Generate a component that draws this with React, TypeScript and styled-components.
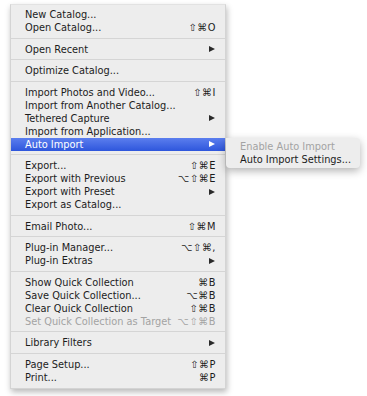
import React from 'react';
import styled, { createGlobalStyle, css } from 'styled-components';

const GlobalStyle = createGlobalStyle`
  html, body {
    margin: 0;
    padding: 0;
    background: #fff;
  }
  body {
    font-family: "DejaVu Sans", "Liberation Sans", sans-serif;
    font-size: 9.8px;
    color: #1c1c1c;
  }
`;

const Page = styled.div`
  position: relative;
  width: 367px;
  height: 396px;
  padding: 4px 0 0 10px;
  box-sizing: border-box;
`;

const Menu = styled.div`
  position: relative;
  width: 216px;
  padding: 3px 0 4px;
  background: #ededed;
  border: 1px solid #d4d4d4;
  border-top-color: #e2e2e2;
  box-sizing: border-box;
  box-shadow: 1px 3px 6px rgba(0, 0, 0, 0.28);
`;

type RowProps = { $active?: boolean; $disabled?: boolean };

const Row = styled.div<RowProps>`
  display: flex;
  align-items: center;
  height: 13px;
  padding: 0 9px 0 14px;
  white-space: nowrap;
  color: ${({ $disabled }) => ($disabled ? '#a3a3a3' : '#1c1c1c')};
  ${({ $active }) =>
    $active &&
    css`
      background: linear-gradient(to bottom, #5b7eee, #2e56dc);
      color: #fff;
    `}
`;

const Label = styled.span`
  flex: 1;
`;

const Shortcut = styled.span`
  letter-spacing: 0.6px;
`;

const Arrow = styled.span<{ $light?: boolean }>`
  width: 0;
  height: 0;
  margin-right: 1px;
  border-top: 3.5px solid transparent;
  border-bottom: 3.5px solid transparent;
  border-left: 6px solid ${({ $light }) => ($light ? '#fff' : '#2a2a2a')};
`;

const Separator = styled.div`
  height: 8.5px;
  display: flex;
  align-items: center;

  &::after {
    content: '';
    flex: 1;
    height: 1px;
    background: #d5d5d5;
  }
`;

const SubMenu = styled.div`
  position: absolute;
  left: 226px;
  top: 138px;
  width: 134px;
  padding: 2px 0 2px;
  background: #ededed;
  border-radius: 0 4px 4px 4px;
  box-shadow: 0 3px 8px rgba(0, 0, 0, 0.3);
`;

const SubRow = styled(Row)`
  padding-left: 14px;
`;

type Item = {
  label: string;
  shortcut?: string;
  submenu?: boolean;
  disabled?: boolean;
  active?: boolean;
};

const groups: Item[][] = [
  [
    { label: 'New Catalog...' },
    { label: 'Open Catalog...', shortcut: '⇧⌘O' },
  ],
  [{ label: 'Open Recent', submenu: true }],
  [{ label: 'Optimize Catalog...' }],
  [
    { label: 'Import Photos and Video...', shortcut: '⇧⌘I' },
    { label: 'Import from Another Catalog...' },
    { label: 'Tethered Capture', submenu: true },
    { label: 'Import from Application...' },
    { label: 'Auto Import', submenu: true, active: true },
  ],
  [
    { label: 'Export...', shortcut: '⇧⌘E' },
    { label: 'Export with Previous', shortcut: '⌥⇧⌘E' },
    { label: 'Export with Preset', submenu: true },
    { label: 'Export as Catalog...' },
  ],
  [{ label: 'Email Photo...', shortcut: '⇧⌘M' }],
  [
    { label: 'Plug-in Manager...', shortcut: '⌥⇧⌘,' },
    { label: 'Plug-in Extras', submenu: true },
  ],
  [
    { label: 'Show Quick Collection', shortcut: '⌘B' },
    { label: 'Save Quick Collection...', shortcut: '⌥⌘B' },
    { label: 'Clear Quick Collection', shortcut: '⇧⌘B' },
    { label: 'Set Quick Collection as Target', shortcut: '⌥⇧⌘B', disabled: true },
  ],
  [{ label: 'Library Filters', submenu: true }],
  [
    { label: 'Page Setup...', shortcut: '⇧⌘P' },
    { label: 'Print...', shortcut: '⌘P' },
  ],
];

const MenuRow = ({ item }: { item: Item }) => (
  <Row $active={item.active} $disabled={item.disabled}>
    <Label>{item.label}</Label>
    {item.shortcut && <Shortcut>{item.shortcut}</Shortcut>}
    {item.submenu && <Arrow $light={item.active} />}
  </Row>
);

export default function App() {
  return (
    <>
      <GlobalStyle />
      <Page>
        <Menu>
          {groups.map((group, i) => (
            <React.Fragment key={i}>
              {i > 0 && <Separator />}
              {group.map(item => (
                <MenuRow key={item.label} item={item} />
              ))}
            </React.Fragment>
          ))}
        </Menu>
        <SubMenu>
          <SubRow $disabled>Enable Auto Import</SubRow>
          <SubRow>Auto Import Settings...</SubRow>
        </SubMenu>
      </Page>
    </>
  );
}
